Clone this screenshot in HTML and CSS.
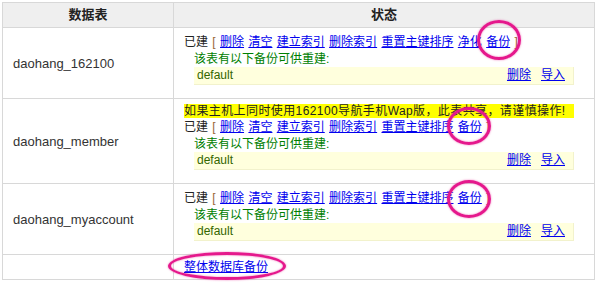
FILE: index.html
```html
<!DOCTYPE html>
<html lang="zh-CN">
<head>
  <meta charset="UTF-8" />
  <title>数据表</title>
  <link rel="stylesheet" href="styles.css">
</head>
<body>
  <div class="sheet">
    <table class="tables">
      <tr>
        <th class="name-col">数据表</th>
        <th>状态</th>
      </tr>
      <tr>
        <td class="name">daohang_162100</td>
        <td class="state">
          <div class="ops">已建 <span class="br">[</span> <a href="#">删除</a> <a href="#">清空</a> <a href="#">建立索引</a> <a href="#">删除索引</a> <a href="#">重置主键排序</a> <a href="#">净化</a> <a href="#">备份</a> <span class="br">]</span></div>
          <div class="note">该表有以下备份可供重建:</div>
          <div class="bak">
            <span class="bak-name">default</span>
            <span class="bak-ops"><a href="#">删除</a><a href="#">导入</a></span>
          </div>
        </td>
      </tr>
      <tr>
        <td class="name">daohang_member</td>
        <td class="state">
          <div class="warn"><span>如果主机上同时使用162100导航手机Wap版，此表共享，请谨慎操作!</span></div>
          <div class="ops">已建 <span class="br">[</span> <a href="#">删除</a> <a href="#">清空</a> <a href="#">建立索引</a> <a href="#">删除索引</a> <a href="#">重置主键排序</a> <a href="#">备份</a> <span class="br">]</span></div>
          <div class="note">该表有以下备份可供重建:</div>
          <div class="bak">
            <span class="bak-name">default</span>
            <span class="bak-ops"><a href="#">删除</a><a href="#">导入</a></span>
          </div>
        </td>
      </tr>
      <tr>
        <td class="name">daohang_myaccount</td>
        <td class="state">
          <div class="ops">已建 <span class="br">[</span> <a href="#">删除</a> <a href="#">清空</a> <a href="#">建立索引</a> <a href="#">删除索引</a> <a href="#">重置主键排序</a> <a href="#">备份</a> <span class="br">]</span></div>
          <div class="note">该表有以下备份可供重建:</div>
          <div class="bak">
            <span class="bak-name">default</span>
            <span class="bak-ops"><a href="#">删除</a><a href="#">导入</a></span>
          </div>
        </td>
      </tr>
      <tr>
        <td></td>
        <td class="all"><a href="#">整体数据库备份</a></td>
      </tr>
    </table>

    <!-- hand-drawn marks over the screenshot -->
    <div class="mark mark1"></div>
    <div class="mark mark2"></div>
    <div class="mark mark3"></div>
    <div class="mark mark4"></div>
  </div>
</body>
</html>
```

FILE: styles.css
```css
body {
  margin: 0;
  padding: 2px;
  font-family: "Liberation Sans", "Noto Sans CJK SC", sans-serif;
  font-size: 12px;
  color: #333;
  background-color: #fff;
}
.sheet {
  position: relative;
}
.tables {
  width: 593px;
  border-collapse: collapse;
  border: 1px solid #d8d8d8;
}
.tables th {
  background-color: #efefef;
  border: 1px solid #d8d8d8;
  font-size: 13px;
  font-weight: bold;
  color: #222;
  height: 24px;
  padding: 0;
  line-height: 18px;
}
.tables th.name-col {
  width: 170px;
}
.tables td {
  border: 1px solid #d8d8d8;
  padding: 5px 10px;
  vertical-align: middle;
}
.tables td.name {
  font-size: 13px;
  color: #333;
}
a {
  color: #0000ee;
  text-decoration: underline;
}
.ops {
  line-height: 18px;
  color: #222;
  word-spacing: 1px;
}
.br {
  color: #996633;
}
.warn {
  line-height: 14px;
}
.warn span {
  background-color: #ffff00;
  padding-right: 8px;
  color: #222;
  letter-spacing: 0.4px;
}
.note {
  margin-left: 10px;
  line-height: 16px;
  color: #008000;
}
.bak {
  display: flex;
  justify-content: space-between;
  margin: 0 10px 8px 10px;
  padding: 0 8px 0 3px;
  line-height: 17px;
  background-color: #ffffdd;
  border-bottom: 1px solid #f2f2cc;
  border-right: 1px solid #f2f2cc;
}
.bak-name {
  color: #336600;
}
.bak-ops {
  display: flex;
  gap: 10px;
}
.tables td.all {
  padding: 3px 10px;
  line-height: 18px;
}
.mark {
  position: absolute;
  border: 3px solid #e5188c;
  border-radius: 50%;
  box-shadow: 0 0 2px rgba(229, 24, 140, 0.6), inset 0 0 2px rgba(229, 24, 140, 0.6);
}
.mark1 {
  left: 475px;
  top: 18px;
  width: 38px;
  height: 34px;
}
.mark2 {
  left: 445px;
  top: 105px;
  width: 38px;
  height: 32px;
}
.mark3 {
  left: 445px;
  top: 178px;
  width: 38px;
  height: 32px;
}
.mark4 {
  left: 166px;
  top: 250px;
  width: 112px;
  height: 22px;
}
```
